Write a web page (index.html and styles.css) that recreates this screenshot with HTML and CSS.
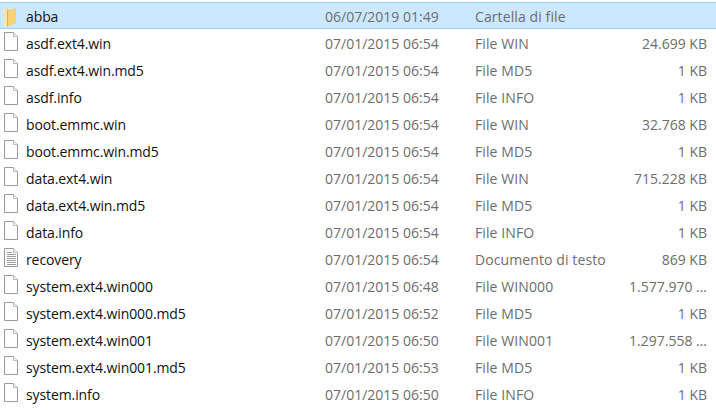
FILE: index.html
```html
<!DOCTYPE html>
<html lang="it">
<head>
<meta charset="utf-8">
<title>Esplora file</title>
<link rel="stylesheet" href="styles.css">
</head>
<body>
<svg class="defs" width="0" height="0" aria-hidden="true">
<symbol id="file" viewBox="0 0 18 22">
<path d="M1.5 0.5H10.5L14.5 4.5V18.5H1.5Z" fill="#fff" stroke="#9a9a9a"/>
<path d="M10.5 0.5V4.5H14.5" fill="#f2f2f2" stroke="#bdbdbd"/>
</symbol>
<symbol id="text" viewBox="0 0 18 22">
<path d="M1.5 0.5H10.5L14.5 4.5V18.5H1.5Z" fill="#fff" stroke="#9a9a9a"/>
<path d="M10.5 0.5V4.5H14.5" fill="#f2f2f2" stroke="#bdbdbd"/>
<path d="M4 4.5H9M4 6.5H13M4 8.5H13M4 10.5H13M4 12.5H13M4 14.5H13M4 16.5H13" stroke="#9d9d9d" fill="none"/>
</symbol>
<symbol id="folder" viewBox="0 0 18 22">
<path d="M1 3H5V5H13V18H1Z" fill="#e6bd62"/>
<path d="M1 3H4.5V21.5H1Z" fill="#fbe6a4"/>
<path d="M4.5 6L13 3V18L4.5 21.5Z" fill="#f6d274"/>
<path d="M4.5 6V21.5" stroke="#e2b04f" fill="none"/>
</symbol>
</svg>
<main class="list">
<div class="row selected"><svg class="icon"><use href="#folder"/></svg><span class="name">abba</span><span class="date">06/07/2019 01:49</span><span class="type">Cartella di file</span><span class="size"></span></div>
<div class="row"><svg class="icon"><use href="#file"/></svg><span class="name">asdf.ext4.win</span><span class="date">07/01/2015 06:54</span><span class="type">File WIN</span><span class="size">24.699 KB</span></div>
<div class="row"><svg class="icon"><use href="#file"/></svg><span class="name">asdf.ext4.win.md5</span><span class="date">07/01/2015 06:54</span><span class="type">File MD5</span><span class="size">1 KB</span></div>
<div class="row"><svg class="icon"><use href="#file"/></svg><span class="name">asdf.info</span><span class="date">07/01/2015 06:54</span><span class="type">File INFO</span><span class="size">1 KB</span></div>
<div class="row"><svg class="icon"><use href="#file"/></svg><span class="name">boot.emmc.win</span><span class="date">07/01/2015 06:54</span><span class="type">File WIN</span><span class="size">32.768 KB</span></div>
<div class="row"><svg class="icon"><use href="#file"/></svg><span class="name">boot.emmc.win.md5</span><span class="date">07/01/2015 06:54</span><span class="type">File MD5</span><span class="size">1 KB</span></div>
<div class="row"><svg class="icon"><use href="#file"/></svg><span class="name">data.ext4.win</span><span class="date">07/01/2015 06:54</span><span class="type">File WIN</span><span class="size">715.228 KB</span></div>
<div class="row"><svg class="icon"><use href="#file"/></svg><span class="name">data.ext4.win.md5</span><span class="date">07/01/2015 06:54</span><span class="type">File MD5</span><span class="size">1 KB</span></div>
<div class="row"><svg class="icon"><use href="#file"/></svg><span class="name">data.info</span><span class="date">07/01/2015 06:54</span><span class="type">File INFO</span><span class="size">1 KB</span></div>
<div class="row"><svg class="icon"><use href="#text"/></svg><span class="name">recovery</span><span class="date">07/01/2015 06:54</span><span class="type">Documento di testo</span><span class="size">869 KB</span></div>
<div class="row"><svg class="icon"><use href="#file"/></svg><span class="name">system.ext4.win000</span><span class="date">07/01/2015 06:48</span><span class="type">File WIN000</span><span class="size">1.577.970 …</span></div>
<div class="row"><svg class="icon"><use href="#file"/></svg><span class="name">system.ext4.win000.md5</span><span class="date">07/01/2015 06:52</span><span class="type">File MD5</span><span class="size">1 KB</span></div>
<div class="row"><svg class="icon"><use href="#file"/></svg><span class="name">system.ext4.win001</span><span class="date">07/01/2015 06:50</span><span class="type">File WIN001</span><span class="size">1.297.558 …</span></div>
<div class="row"><svg class="icon"><use href="#file"/></svg><span class="name">system.ext4.win001.md5</span><span class="date">07/01/2015 06:53</span><span class="type">File MD5</span><span class="size">1 KB</span></div>
<div class="row"><svg class="icon"><use href="#file"/></svg><span class="name">system.info</span><span class="date">07/01/2015 06:50</span><span class="type">File INFO</span><span class="size">1 KB</span></div>
</main>
</body>
</html>
```
FILE: styles.css
```css
html, body {
  margin: 0;
  padding: 0;
  background: #fff;
  overflow: hidden;
}
.defs {
  display: block;
  height: 0;
}
.list {
  padding-top: 2px;
  font-family: "Open Sans", "Noto Sans", sans-serif;
  font-size: 14px;
  color: #6d6d6d;
}
.row {
  display: grid;
  grid-template-columns: 3px 18px 5px 299px 150px 1fr auto;
  align-items: center;
  height: 27px;
  padding-right: 9px;
  box-sizing: border-box;
  border: 1px solid transparent;
  border-width: 1px 0;
  white-space: nowrap;
}
.selected {
  background: #cce8ff;
  border-color: #99d1ff;
}
.icon {
  grid-column: 2;
  width: 18px;
  height: 22px;
}
.name, .date, .type, .size {
  padding-top: 2px;
}
.name {
  grid-column: 4;
  color: #111;
  letter-spacing: -0.1px;
}
.date {
  grid-column: 5;
}
.type {
  grid-column: 6;
  letter-spacing: 0.1px;
}
.size {
  grid-column: 7;
  text-align: right;
}
```
